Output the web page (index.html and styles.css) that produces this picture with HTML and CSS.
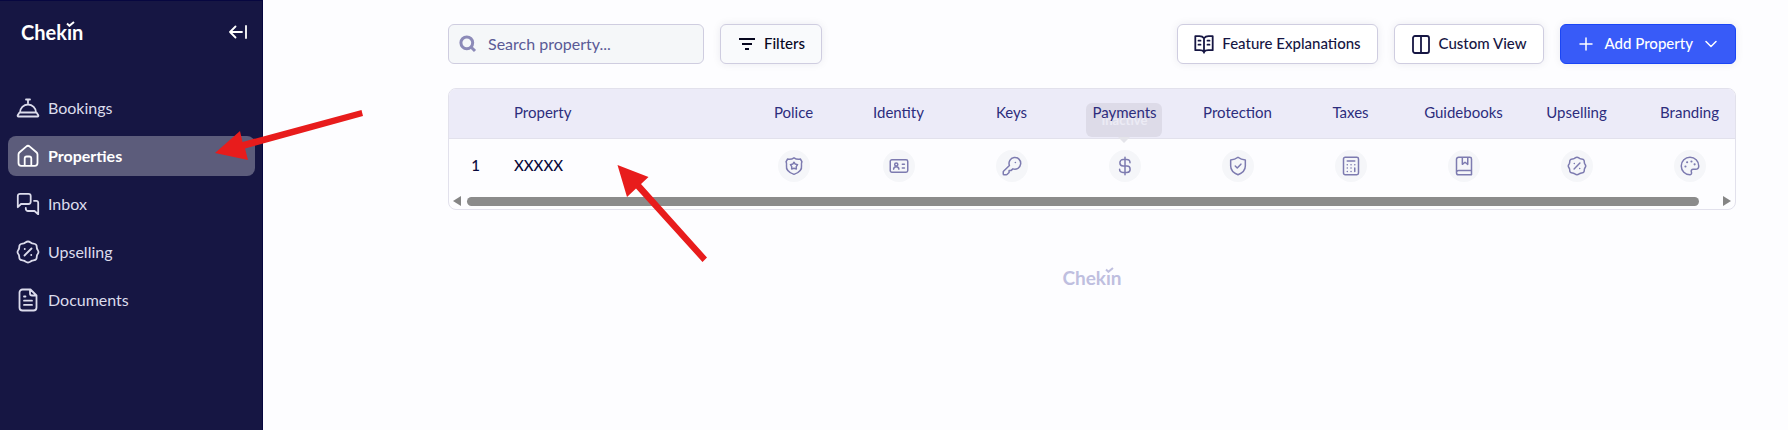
FILE: index.html
```html
<!DOCTYPE html>
<html lang="en">
<head>
    <meta charset="UTF-8">
    <meta name="viewport" content="width=device-width, initial-scale=1.0">
    <title>Chekin - Properties</title>
    <link rel="stylesheet" href="styles.css">
</head>
<body>
    <aside class="sidebar">
        <div class="sidebar-header">
            <a href="#" class="logo">Chek<span class="logo-i">ı<svg class="logo-check" viewBox="0 0 9 6"><path d="M1 2.6 3.4 4.8 8 1"/></svg></span>n</a>
            <button type="button" class="collapse" aria-label="Collapse menu">
                <svg class="icon" width="18" height="14" viewBox="0 0 18 14"><path d="M13 7H1M6.500 1.500 1 7l5.500 5.500M17 1v12"/></svg>
            </button>
        </div>
        <nav class="menu">
            <a href="#" class="menu-item">
                <svg class="icon" width="24" height="24" viewBox="0 0 24 24"><path d="M10 3.500h4M12 3.500V7M4 16.500a8 8 0 0 1 16 0M3.500 16.500h17l1.800 2.800c.3.600 0 1.200-.7 1.200H2.400c-.7 0-1-.6-.7-1.200z"/></svg>
                <span class="label">Bookings</span>
            </a>
            <a href="#" class="menu-item active">
                <svg class="icon" width="24" height="24" viewBox="0 0 24 24"><path d="M2.500 10.500c0-.9.400-1.600 1.100-2.200l6.600-5.700a2.700 2.700 0 0 1 3.600 0l6.600 5.700c.7.600 1.100 1.300 1.100 2.200V19a2.800 2.800 0 0 1-2.800 2.800H5.300A2.800 2.800 0 0 1 2.500 19zM8.700 21.500v-7a2 2 0 0 1 2-2h2.600a2 2 0 0 1 2 2v7"/></svg>
                <span class="label">Properties</span>
            </a>
            <a href="#" class="menu-item">
                <svg class="icon" width="24" height="24" viewBox="0 0 24 24"><path d="M1.800 15.200V4a2.200 2.200 0 0 1 2.200-2.200h8.500A2.200 2.200 0 0 1 14.700 4v5.800a2.200 2.200 0 0 1-2.200 2.200H5zM18 8.800h2.200a2 2 0 0 1 2 2v11.400L18.500 19H12a2.200 2.200 0 0 1-2.200-2.200V16"/></svg>
                <span class="label">Inbox</span>
            </a>
            <a href="#" class="menu-item">
                <svg class="icon" width="24" height="24" viewBox="0 0 24 24"><use href="#percent-badge"/></svg>
                <span class="label">Upselling</span>
            </a>
            <a href="#" class="menu-item">
                <svg class="icon" width="24" height="24" viewBox="0 0 24 24"><path d="M14.500 1.500H6.500a3 3 0 0 0-3 3v15a3 3 0 0 0 3 3h11a3 3 0 0 0 3-3V7.500zM14 1.500v4a2 2 0 0 0 2 2h4.500M8 8.500h1.500M8 12.700h8M8 16.900h8"/></svg>
                <span class="label">Documents</span>
            </a>
        </nav>
    </aside>

    <main class="content">
        <div class="toolbar">
            <label class="search">
                <svg width="18" height="18" viewBox="0 0 18 18"><circle cx="7.800" cy="7.800" r="5.900"/><path d="m12.200 12.200 3.800 3.800"/></svg>
                <input type="text" placeholder="Search property..." aria-label="Search property">
            </label>
            <button type="button" class="btn btn-filters">
                <svg class="filter-icon" width="16" height="14" viewBox="0 0 16 14"><path d="M0 2h16M3 7h10M6 12h4"/></svg>
                <span class="label">Filters</span>
            </button>
            <div class="actions">
                <button type="button" class="btn">
                    <svg class="icon" width="20" height="20" viewBox="0 0 20 20"><path d="M10 4.200v14.500M10 4.200C9 2.900 7.500 2.200 5.500 2.200H1.300v14h4.500c2 0 3.400.6 4.200 1.800.8-1.200 2.200-1.800 4.200-1.800h4.500v-14h-4.200c-2 0-3.500.7-4.500 2zM4.500 6.700h2M4.500 10.700h2M13.500 6.700h2M13.500 10.700h2"/></svg>
                    <span class="label">Feature Explanations</span>
                </button>
                <button type="button" class="btn">
                    <svg class="icon" width="20" height="20" viewBox="0 0 20 20"><rect x="2" y="2" width="16" height="17" rx="2"/><path d="M10 2v17"/></svg>
                    <span class="label">Custom View</span>
                </button>
                <button type="button" class="btn btn-primary">
                    <svg class="icon thin" width="14" height="14" viewBox="0 0 14 14"><path d="M7 1v12M1 7h12"/></svg>
                    <span class="label">Add Property</span>
                    <svg class="icon thin" width="12" height="8" viewBox="0 0 12 8"><path d="m1 1.500 5 5 5-5"/></svg>
                </button>
            </div>
        </div>

        <div class="table-box">
            <table>
                <colgroup>
                    <col class="col-number">
                    <col>
                    <col class="col-police">
                    <col class="col-feature" span="8">
                </colgroup>
                <thead>
                    <tr>
                        <th></th>
                        <th class="left">Property</th>
                        <th>Police</th>
                        <th>Identity</th>
                        <th>Keys</th>
                        <th><span class="header-tip"><span class="header-text">Payments</span><span class="tooltip">Inactive</span></span></th>
                        <th>Protection</th>
                        <th>Taxes</th>
                        <th>Guidebooks</th>
                        <th>Upselling</th>
                        <th>Branding</th>
                    </tr>
                </thead>
                <tbody>
                    <tr>
                        <td class="number">1</td>
                        <td class="left name">XXXXX</td>
                        <td><span class="badge"><svg class="icon" width="20" height="20" viewBox="0 0 24 24"><path d="M12 2.200c2.200 1.500 5 2 7.600 1.400l1.900 3.200c-.7 1.600-.8 3-.5 5 .8 5-3.500 8.200-9 10.200-5.500-2-9.800-5.200-9-10.200.3-2 .2-3.400-.5-5l1.900-3.200c2.600.6 5.400.1 7.600-1.400z"/><path d="m12 7.500 1.500 2.200 2.800.7-1.600 2.300.1 2.800-2.800-.8-2.800.8.1-2.800-1.600-2.300 2.800-.7z"/></svg></span></td>
                        <td><span class="badge"><svg class="icon" width="20" height="20" viewBox="0 0 24 24"><rect x="1.500" y="4.500" width="21" height="15" rx="2"/><circle cx="8.700" cy="10.200" r="1.900"/><path d="M5.500 15.800c.2-2 1.400-3 3.200-3s3 1 3.200 3M16 10h2.500M16 14.500h2.500"/></svg></span></td>
                        <td><span class="badge"><svg class="icon" width="20" height="20" viewBox="0 0 24 24"><path d="M8.900 11.300a7 7 0 1 1 4.200 4.100L11 17.300H8.500v2.500L6 22.200a1 1 0 0 1-.7.300H2.500a1 1 0 0 1-1-1v-2.400c0-.3.100-.6.300-.8z"/><path d="M16 7.700h.1"/></svg></span></td>
                        <td><span class="badge"><svg class="icon" width="20" height="20" viewBox="0 0 24 24"><path d="M12 1.500v21M18 8c0-2.300-1.700-3.700-4-3.700h-4.300a3.800 3.800 0 0 0 0 7.700h4.600a3.800 3.800 0 0 1 0 7.700H9.500C7.200 19.700 5.500 18.300 5.500 16"/></svg></span></td>
                        <td><span class="badge"><svg class="icon" width="20" height="20" viewBox="0 0 24 24"><path d="M12 1.500c2.500 2 5.300 3 8.800 3.200V12c0 5.200-3.300 8.300-8.800 10.500C6.500 20.300 3.200 17.200 3.200 12V4.700c3.500-.2 6.300-1.200 8.800-3.200z"/><path d="m8.700 12 2.400 2.400 4.400-4.600"/></svg></span></td>
                        <td><span class="badge"><svg class="icon" width="20" height="20" viewBox="0 0 24 24"><rect x="3" y="1.500" width="18" height="21" rx="2"/><path d="M7.500 6h9M7.500 10.500h.1M12 10.500h.1M16.500 10.500h.1M7.500 14.500h.1M12 14.500h.1M7.500 18.500h.1M12 18.500h.1M16.500 14.500v4"/></svg></span></td>
                        <td><span class="badge"><svg class="icon" width="20" height="20" viewBox="0 0 24 24"><path d="M5.500 1.500H19a2 2 0 0 1 2 2v19H5.500A2.500 2.500 0 0 1 3 20V4a2.500 2.500 0 0 1 2.500-2.500zM3.200 19c.3-1 1.100-1.500 2.300-1.500H21M10 1.500V10l3.200-2.500L16.500 10V1.500"/></svg></span></td>
                        <td><span class="badge"><svg class="icon" width="20" height="20" viewBox="0 0 24 24"><g id="percent-badge"><path d="M12 1.500c1.900 0 2.700 1.400 4.300 1.900 1.500.4 3.200.2 4 1.600.7 1 .2 2.600.8 4 .6 1.100 1.400 1.900 1.400 3s-.8 1.900-1.400 3c-.6 1.400-.1 3-.8 4-.8 1.400-2.500 1.200-4 1.600-1.600.5-2.400 1.900-4.300 1.900s-2.700-1.400-4.300-1.900c-1.500-.4-3.200-.2-4-1.600-.7-1-.2-2.600-.8-4-.6-1.100-1.400-1.900-1.400-3s.8-1.900 1.400-3c.6-1.400.1-3 .8-4 .8-1.400 2.500-1.200 4-1.600 1.600-.5 2.400-1.900 4.300-1.900z"/><path d="m8.500 15.500 7-7M8.700 9h.1M15.200 15h.1"/></g></svg></span></td>
                        <td><span class="badge"><svg class="icon" width="20" height="20" viewBox="0 0 24 24"><path d="M12 22.500a10.500 10.500 0 1 1 10.500-10.500c0 2.500-1.500 4-4 4h-2.700c-2 0-2.800 1.400-2.200 3 .6 1.500.2 3.300-1.600 3.500z"/><path d="M6.500 12.500h.1M8.500 7.500h.1M13.700 6.500h.1M17.500 10h.1" class="dots"/></svg></span></td>
                    </tr>
                </tbody>
            </table>
            <div class="scrollbar">
                <svg width="8" height="10" viewBox="0 0 8 10"><path d="M8 0v10L0 5z"/></svg>
                <div class="track"><div class="thumb"></div></div>
                <svg width="8" height="10" viewBox="0 0 8 10"><path d="M0 0v10l8-5z"/></svg>
            </div>
        </div>

        <footer class="footer">
            <span class="logo logo-muted">Chek<span class="logo-i">ı<svg class="logo-check" viewBox="0 0 9 6"><path d="M1 2.6 3.4 4.8 8 1"/></svg></span>n</span>
        </footer>
    </main>

    <svg class="arrows" width="720" height="270" viewBox="0 0 720 270">
        <path d="M215 153 240 131 242.500 142 361.500 110 363 116 245 148.500 248 160z"/>
        <path d="M617.500 165 648.500 177 641 184 707 257.500 702.500 262 636 188.500 627 197z"/>
    </svg>
</body>
</html>
```
FILE: styles.css
```css
* {
    box-sizing: border-box;
}

body {
    margin: 0;
    min-height: 100vh;
    display: flex;
    background-color: #fdfdff;
    color: #161643;
    font-family: Lato, "Liberation Sans", sans-serif;
    font-size: 15px;
}

a {
    color: inherit;
    text-decoration: none;
}

button {
    font: inherit;
    cursor: pointer;
}

.icon {
    flex: none;
    fill: none;
    stroke: currentColor;
    stroke-width: 1.8;
    stroke-linecap: round;
    stroke-linejoin: round;
}

.thin {
    stroke-width: 1.5;
}

.label {
    padding-bottom: 2px;
}

/* sidebar */
.sidebar {
    flex: none;
    width: 263px;
    background-color: #161643;
    border-top: 1px solid #070740;
    border-right: 1px solid #070740;
    color: #dcdcec;
}

.sidebar-header {
    display: flex;
    align-items: center;
    justify-content: space-between;
    height: 62px;
    padding: 0 13px 0 21px;
}

.logo {
    color: #ffffff;
    font-size: 20px;
    font-weight: bold;
    line-height: 24px;
}

.logo-i {
    position: relative;
}

.logo-check {
    position: absolute;
    left: -1px;
    top: 1px;
    width: 9px;
    height: 6px;
    fill: none;
    stroke: currentColor;
    stroke-width: 2;
}

.logo-muted {
    color: #bfbfdf;
    font-size: 19px;
}

.collapse {
    display: flex;
    padding: 2px;
    border: none;
    background: none;
    color: #ffffff;
}

.menu {
    display: flex;
    flex-direction: column;
    gap: 8px;
    padding: 25px 7px 0 8px;
}

.menu-item {
    display: flex;
    align-items: center;
    gap: 8px;
    height: 40px;
    padding: 0 8px;
    border-radius: 8px;
    font-size: 16px;
}

.menu-item.active {
    background-color: #5c5c7b;
    color: #ffffff;
    font-weight: bold;
}

/* content */
.content {
    flex: 1;
    min-width: 0;
    padding: 24px 52px 24px 185px;
}

.toolbar {
    display: flex;
    gap: 16px;
    margin-bottom: 24px;
}

.search {
    display: flex;
    align-items: center;
    gap: 11px;
    width: 256px;
    height: 40px;
    padding: 0 10px;
    border: 1px solid #cfcde0;
    border-radius: 6px;
    background-color: #f5f7f9;
}

.search svg {
    flex: none;
    fill: none;
    stroke: #8c8ab8;
    stroke-width: 3;
}

.search input {
    flex: 1;
    min-width: 0;
    padding: 0 0 2px;
    border: none;
    outline: none;
    background: none;
    color: #161643;
    font: inherit;
    font-size: 16px;
}

.search input::placeholder {
    color: #5a5a96;
}

.actions {
    display: flex;
    gap: 16px;
    margin-left: auto;
}

.btn {
    display: flex;
    align-items: center;
    gap: 8px;
    height: 40px;
    padding: 0 16px;
    border: 1px solid #cfcde0;
    border-radius: 6px;
    background-color: #ffffff;
    box-shadow: 0 0 8px rgba(22, 22, 67, .08);
    color: #161643;
    font-weight: 500;
    white-space: nowrap;
}

.btn-filters {
    gap: 9px;
    padding: 0 16px 0 18px;
    background-color: #f9fafc;
    color: #07071f;
}

.filter-icon {
    stroke: #07071f;
    stroke-width: 2;
}

.btn-primary {
    gap: 12px;
    padding: 0 18px;
    border-color: #1a45f5;
    background-color: #385bf8;
    color: #ffffff;
}

/* table */
.table-box {
    overflow: hidden;
    border: 1px solid #e2e1ec;
    border-radius: 8px;
}

/* wider than its box, the last column runs under the edge */
table {
    width: calc(100% + 11px);
    border-collapse: collapse;
    table-layout: fixed;
}

.col-number {
    width: 65px;
}

.col-police {
    width: 97px;
}

.col-feature {
    width: 113px;
}

th {
    height: 49px;
    padding: 0 0 2px;
    border-bottom: 1px solid #e2e1ec;
    background-color: #ecebf8;
    color: #2d2d7d;
    font-weight: normal;
}

td {
    height: 55px;
    padding: 0;
    text-align: center;
}

.left {
    text-align: left;
}

.number,
.name {
    padding-bottom: 2px;
    color: #07073a;
    font-weight: 500;
}

.number {
    padding-right: 12px;
}

.badge {
    display: flex;
    align-items: center;
    justify-content: center;
    width: 32px;
    height: 32px;
    margin: 0 auto;
    border-radius: 50%;
    background-color: #f5f6f9;
    color: #7d7bb0;
}

.dots {
    stroke-width: 2.5;
}

.header-tip {
    position: relative;
}

.header-text {
    position: relative;
    z-index: 1;
}

.tooltip {
    position: absolute;
    top: 0;
    left: 50%;
    width: 76px;
    margin-left: -38px;
    border-radius: 6px;
    background-color: #dddbe8;
    color: #ecebf5;
    font-size: 13px;
    font-weight: bold;
    line-height: 34px;
}

.tooltip::after {
    content: "";
    position: absolute;
    top: 100%;
    left: 50%;
    margin-left: -6px;
    border: 6px solid transparent;
    border-top-color: #e4e4ea;
    border-bottom: none;
}

.scrollbar {
    display: flex;
    align-items: center;
    gap: 6px;
    height: 16px;
    padding: 0 4px;
}

.scrollbar svg {
    fill: #858585;
}

.track {
    flex: 1;
    padding-right: 18px;
}

.thumb {
    height: 9px;
    border-radius: 5px;
    background-color: #8b8b8b;
}

.footer {
    margin-top: 56px;
    text-align: center;
}

/* pointers over the page */
.arrows {
    position: absolute;
    top: 0;
    left: 0;
    fill: #e81c1c;
    pointer-events: none;
}
```
